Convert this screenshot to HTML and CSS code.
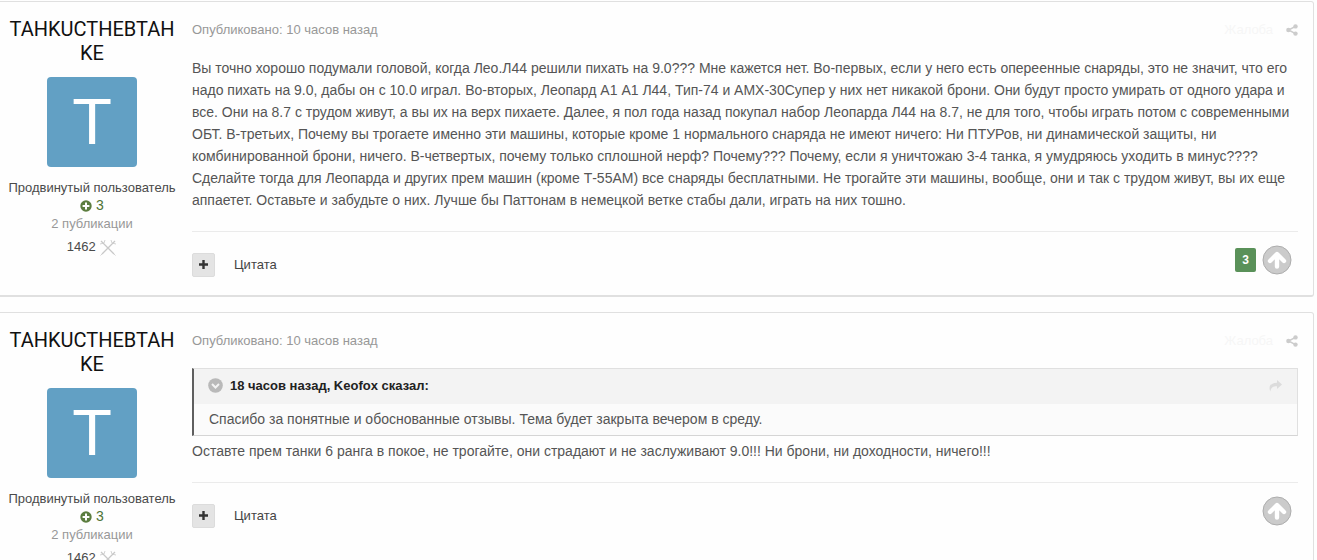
FILE: index.html
```
<!DOCTYPE html>
<html lang="ru">
<head>
    <meta charset="UTF-8">
    <meta name="viewport" content="width=device-width, initial-scale=1.0">
    <title>Форум</title>
    <link rel="stylesheet" href="styles.css">
</head>
<body>

<svg class="sprite" width="0" height="0">
    <symbol id="share" viewBox="0 0 12 12">
        <path d="M9.500 2.300 2.500 6l7 3.700" fill="none" stroke="currentColor" stroke-width="1.500"/>
        <circle cx="9.500" cy="2.400" r="2.200"/>
        <circle cx="2.400" cy="6" r="2.200"/>
        <circle cx="9.500" cy="9.600" r="2.200"/>
    </symbol>
    <symbol id="plus-circle" viewBox="0 0 12 12">
        <path fill-rule="evenodd" d="M6 .3a5.700 5.700 0 1 0 0 11.400A5.700 5.700 0 0 0 6 .3zM5 2.600h2V5h2.400v2H7v2.400H5V7H2.600V5H5z"/>
    </symbol>
    <symbol id="swords" viewBox="0 0 18 18">
        <g fill="none" stroke="currentColor">
            <path d="M2 2l13 13M16 2L3 15" stroke-width="1.300"/>
            <path d="M1 5l4-1 1-3M17 5l-4-1-1-3M1.500 16.500l3-3M16.500 16.500l-3-3" stroke-width=".8"/>
        </g>
    </symbol>
    <symbol id="up" viewBox="0 0 30 30">
        <circle cx="15" cy="15" r="14" fill="#cbcbcb" stroke="#adadad"/>
        <path d="M8 16l7-7 7 7M15 11v10.500" fill="none" stroke="#fff" stroke-width="4.400" stroke-linecap="round" stroke-linejoin="round"/>
    </symbol>
</svg>

<article class="post">
    <aside class="author">
        <h3 class="author-name">TAHKUCTHEBTAHKE</h3>
        <div class="avatar">T</div>
        <ul class="author-info">
            <li>Продвинутый пользователь</li>
            <li class="rep"><svg width="12" height="12"><use href="#plus-circle"/></svg> 3</li>
            <li class="count">2 публикации</li>
            <li class="battles">1462 <svg width="18" height="18"><use href="#swords"/></svg></li>
        </ul>
    </aside>
    <div class="content">
        <div class="meta">
            <span>Опубликовано: 10 часов назад</span>
            <span class="report">Жалоба</span>
            <svg class="share" width="12" height="12"><use href="#share"/></svg>
        </div>
        <p class="text">
            Вы точно хорошо подумали головой, когда Лео.Л44 решили пихать на 9.0??? Мне кажется нет. Во-первых, если у него есть опереенные снаряды, это не значит, что его<br>
            надо пихать на 9.0, дабы он с 10.0 играл. Во-вторых, Леопард А1 А1 Л44, Тип-74 и АМХ-30Супер у них нет никакой брони. Они будут просто умирать от одного удара и<br>
            все. Они на 8.7 с трудом живут, а вы их на верх пихаете. Далее, я пол года назад покупал набор Леопарда Л44 на 8.7, не для того, чтобы играть потом с современными<br>
            ОБТ. В-третьих, Почему вы трогаете именно эти машины, которые кроме 1 нормального снаряда не имеют ничего: Ни ПТУРов, ни динамической защиты, ни<br>
            комбинированной брони, ничего. В-четвертых, почему только сплошной нерф? Почему??? Почему, если я уничтожаю 3-4 танка, я умудряюсь уходить в минус????<br>
            Сделайте тогда для Леопарда и других прем машин (кроме Т-55АМ) все снаряды бесплатными. Не трогайте эти машины, вообще, они и так с трудом живут, вы их еще<br>
            аппаетет. Оставьте и забудьте о них. Лучше бы Паттонам в немецкой ветке стабы дали, играть на них тошно.
        </p>
        <div class="controls">
            <button class="multiquote"><svg width="9" height="9" viewBox="0 0 9 9"><path d="M4.500 0v9M0 4.500h9" stroke="currentColor" stroke-width="2.400"/></svg></button>
            <a class="quote-link">Цитата</a>
            <div class="votes">
                <span class="score">3</span>
                <svg width="30" height="30"><use href="#up"/></svg>
            </div>
        </div>
    </div>
</article>

<article class="post">
    <aside class="author">
        <h3 class="author-name">TAHKUCTHEBTAHKE</h3>
        <div class="avatar">T</div>
        <ul class="author-info">
            <li>Продвинутый пользователь</li>
            <li class="rep"><svg width="12" height="12"><use href="#plus-circle"/></svg> 3</li>
            <li class="count">2 публикации</li>
            <li class="battles">1462 <svg width="18" height="18"><use href="#swords"/></svg></li>
        </ul>
    </aside>
    <div class="content">
        <div class="meta">
            <span>Опубликовано: 10 часов назад</span>
            <span class="report">Жалоба</span>
            <svg class="share" width="12" height="12"><use href="#share"/></svg>
        </div>
        <blockquote class="quote">
            <div class="quote-head">
                <svg width="15" height="15" viewBox="0 0 15 15"><circle cx="7.500" cy="7.500" r="7.300" fill="#b9b9b9"/><path d="M4 6l3.500 3.500L11 6" fill="none" stroke="#f3f3f3" stroke-width="2"/></svg>
                <span>18 часов назад, Keofox сказал:</span>
                <svg class="quote-go" width="13" height="12" viewBox="0 0 13 12"><path d="M8 0l5 4.500L8 9V6.300C4.500 6.200 2.300 7 1.300 11.500-.8 6.500 1.500 2.800 8 2.700z" fill="#dcdcdc"/></svg>
            </div>
            <div class="quote-body">Спасибо за понятные и обоснованные отзывы. Тема будет закрыта вечером в среду.</div>
        </blockquote>
        <p class="text">Оставте прем танки 6 ранга в покое, не трогайте, они страдают и не заслуживают 9.0!!! Ни брони, ни доходности, ничего!!!</p>
        <div class="controls">
            <button class="multiquote"><svg width="9" height="9" viewBox="0 0 9 9"><path d="M4.500 0v9M0 4.500h9" stroke="currentColor" stroke-width="2.400"/></svg></button>
            <a class="quote-link">Цитата</a>
            <div class="votes">
                <svg width="30" height="30"><use href="#up"/></svg>
            </div>
        </div>
    </div>
</article>

</body>
</html>
```
FILE: styles.css
```
* { box-sizing: border-box; }
body { font-family: "Liberation Sans", Arial, sans-serif; font-size: 13px; line-height: 18px; height: 560px; margin: 0; padding-top: 1px; background-color: #fefefe; color: #4a4a4a; overflow: hidden; }
.sprite { display: block; position: absolute; }
.post { display: flex; width: 1314px; height: 296px; margin-bottom: 15px; background-color: #fefefe; border: 1px solid #e0e0e0; border-left: none; border-bottom-width: 2px; border-radius: 0 3px 3px 0; }
.author { width: 184px; padding: 15px 8px 0; text-align: center; flex-shrink: 0; }
.author-name { font-family: Roboto, sans-serif; font-size: 20px; font-weight: 400; line-height: 24px; color: #111; margin: 0 0 12px; word-break: break-all; }
.avatar { width: 90px; height: 90px; margin: 0 auto 12px; border-radius: 4px; background-color: #62a0c4; color: #fff; font-size: 65px; line-height: 90px; }
.author-info { list-style: none; margin: 0 -8px; padding: 0; white-space: nowrap; }
.author-info .rep { height: 18px; color: #4f7436; font-size: 14px; line-height: 17px; }
.rep svg { fill: #5b7d3f; vertical-align: -2px; }
.author-info .count { color: #989898; }
.battles { margin-top: 5px; font-size: 13px; }
.battles svg { color: #c8c8c8; vertical-align: -6px; }
.content { flex-grow: 1; padding: 19px 15px 0 8px; }
.meta { display: flex; align-items: center; height: 18px; margin-bottom: 18px; color: #989898; }
.report { margin-left: auto; margin-right: 13px; color: #f6f6f6; }
.share { fill: #ccc; color: #ccc; }
.text { font-size: 14px; line-height: 22px; margin: 0; color: #555; white-space: nowrap; }
.controls { display: flex; align-items: center; height: 66px; margin-top: 20px; border-top: 1px solid #ebebeb; }
.multiquote { display: flex; align-items: center; justify-content: center; width: 23px; height: 24px; padding: 0; border: 1px solid #dcdcdc; border-radius: 2px; background-color: #e4e4e4; color: #333; }
.quote-link { margin-left: 19px; color: #444; }
.votes { display: flex; align-items: center; gap: 7px; margin: -10px 5px 0 auto; }
.votes svg { margin-left: -1px; margin-right: 1px; }
.score { width: 21px; height: 24px; border-radius: 2px; background-color: #5a9159; color: #fff; font-size: 12px; font-weight: bold; line-height: 24px; text-align: center; }
.quote { margin: 0 0 4px; border: 1px solid #e0e0e0; border-left: 2px solid #5f5f5f; border-bottom-color: #d5d5d5; background-color: #fbfbfb; }
.quote-head { display: flex; align-items: center; height: 35px; padding: 0 15px 2px 14px; background-color: #f3f3f3; color: #222; font-weight: bold; }
.quote-head span { margin-left: 7px; }
.quote-go { margin-left: auto; }
.quote-body { padding: 4px 15px 5px; font-size: 14px; line-height: 22px; color: #555; }
```
